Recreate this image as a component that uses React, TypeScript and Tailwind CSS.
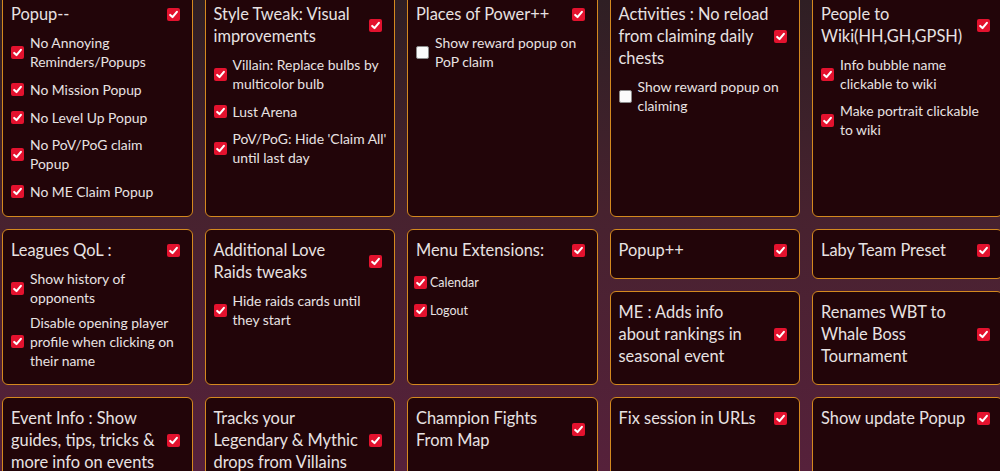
import React from "react";

const Box = ({ checked, className = "" }: { checked: boolean; className?: string }) =>
  checked ? (
    <span
      className={
        "inline-flex w-[13px] h-[13px] shrink-0 rounded-[2px] bg-[#e3122e] items-center justify-center " + className
      }
    >
      <svg width="13" height="13" viewBox="0 0 13 13">
        <path
          d="M3.2 6.9 L5.5 9.1 L9.9 3.9"
          stroke="white"
          strokeWidth="2.1"
          fill="none"
          strokeLinecap="round"
          strokeLinejoin="round"
        />
      </svg>
    </span>
  ) : (
    <span className={"inline-block w-[13px] h-[13px] shrink-0 rounded-[2px] bg-[#fbfbfb] border border-[#8c8c8c] " + className} />
  );

type Item = { t: string[]; c: boolean };

const Lines = ({ lines }: { lines: string[] }) => (
  <div className="flex-1 min-w-0">
    {lines.map((l, i) => (
      <span key={i} className="block whitespace-nowrap">
        {l}
      </span>
    ))}
  </div>
);

const Card = ({
  title,
  items = [],
  small = false,
  tight = false,
  className = "",
}: {
  title: string[];
  items?: Item[];
  small?: boolean;
  tight?: boolean;
  className?: string;
}) => (
  <div
    className={
      "rounded-[6px] border border-[#d4891f] bg-[#220509] px-[8px] pt-[9px] pb-[9px] text-[#e8e2e2] " + className
    }
  >
    <div className="flex items-center mb-[8px] text-[16.4px] leading-[22px]">
      <Lines lines={title} />
      <Box checked className="ml-[6px] mr-[4px]" />
    </div>
    {items.length > 0 && (
      <div
        className={
          "flex flex-col " +
          (small ? "gap-[9px] pt-[4px] pb-[6px]" : tight ? "gap-[6px] pb-[4px]" : "gap-[8px] pb-[6px]")
        }
      >
        {items.map((it, i) =>
          small ? (
            <div key={i} className="flex items-center gap-[3px] text-[12.5px] leading-[19px] -ml-[2px]">
              <Box checked={it.c} />
              <Lines lines={it.t} />
            </div>
          ) : (
            <div key={i} className="flex items-center gap-[6px] text-[13.9px] leading-[19px] min-h-[20px]">
              <Box checked={it.c} />
              <Lines lines={it.t} />
            </div>
          )
        )}
      </div>
    )}
  </div>
);

export default function App() {
  return (
    <div
      className="w-[1000px] h-[471px] overflow-hidden bg-[linear-gradient(180deg,#2f1f24_0%,#47222f_45%,#56213b_100%)]"
      style={{ fontFamily: "Lato, 'Noto Sans', sans-serif" }}
    >
      <div className="ml-[2px] -mt-[7px] grid grid-cols-[repeat(5,190.5px)] gap-x-[12px] gap-y-[12px]">
        <Card
          title={["Popup--"]}
          items={[
            { t: ["No Annoying", "Reminders/Popups"], c: true },
            { t: ["No Mission Popup"], c: true },
            { t: ["No Level Up Popup"], c: true },
            { t: ["No PoV/PoG claim", "Popup"], c: true },
            { t: ["No ME Claim Popup"], c: true },
          ]}
        />
        <Card
          title={["Style Tweak: Visual", "improvements"]}
          items={[
            { t: ["Villain: Replace bulbs by", "multicolor bulb"], c: true },
            { t: ["Lust Arena"], c: true },
            { t: ["PoV/PoG: Hide 'Claim All'", "until last day"], c: true },
          ]}
        />
        <Card title={["Places of Power++"]} items={[{ t: ["Show reward popup on", "PoP claim"], c: false }]} />
        <Card
          title={["Activities : No reload", "from claiming daily", "chests"]}
          items={[{ t: ["Show reward popup on", "claiming"], c: false }]}
        />
        <Card
          title={["People to", "Wiki(HH,GH,GPSH)"]}
          items={[
            { t: ["Info bubble name", "clickable to wiki"], c: true },
            { t: ["Make portrait clickable", "to wiki"], c: true },
          ]}
        />

        <Card
          title={["Leagues QoL :"]}
          tight
          items={[
            { t: ["Show history of", "opponents"], c: true },
            { t: ["Disable opening player", "profile when clicking on", "their name"], c: true },
          ]}
        />
        <Card title={["Additional Love", "Raids tweaks"]} items={[{ t: ["Hide raids cards until", "they start"], c: true }]} />
        <Card
          title={["Menu Extensions:"]}
          small
          items={[
            { t: ["Calendar"], c: true },
            { t: ["Logout"], c: true },
          ]}
        />
        <div className="flex flex-col gap-[12px]">
          <Card title={["Popup++"]} />
          <Card title={["ME : Adds info", "about rankings in", "seasonal event"]} className="flex-1" />
        </div>
        <div className="flex flex-col gap-[12px]">
          <Card title={["Laby Team Preset"]} />
          <Card title={["Renames WBT to", "Whale Boss", "Tournament"]} className="flex-1" />
        </div>

        <Card title={["Event Info : Show", "guides, tips, tricks &", "more info on events"]} />
        <Card title={["Tracks your", "Legendary & Mythic", "drops from Villains"]} />
        <Card title={["Champion Fights", "From Map"]} />
        <Card title={["Fix session in URLs"]} />
        <Card title={["Show update Popup"]} />
      </div>
    </div>
  );
}
